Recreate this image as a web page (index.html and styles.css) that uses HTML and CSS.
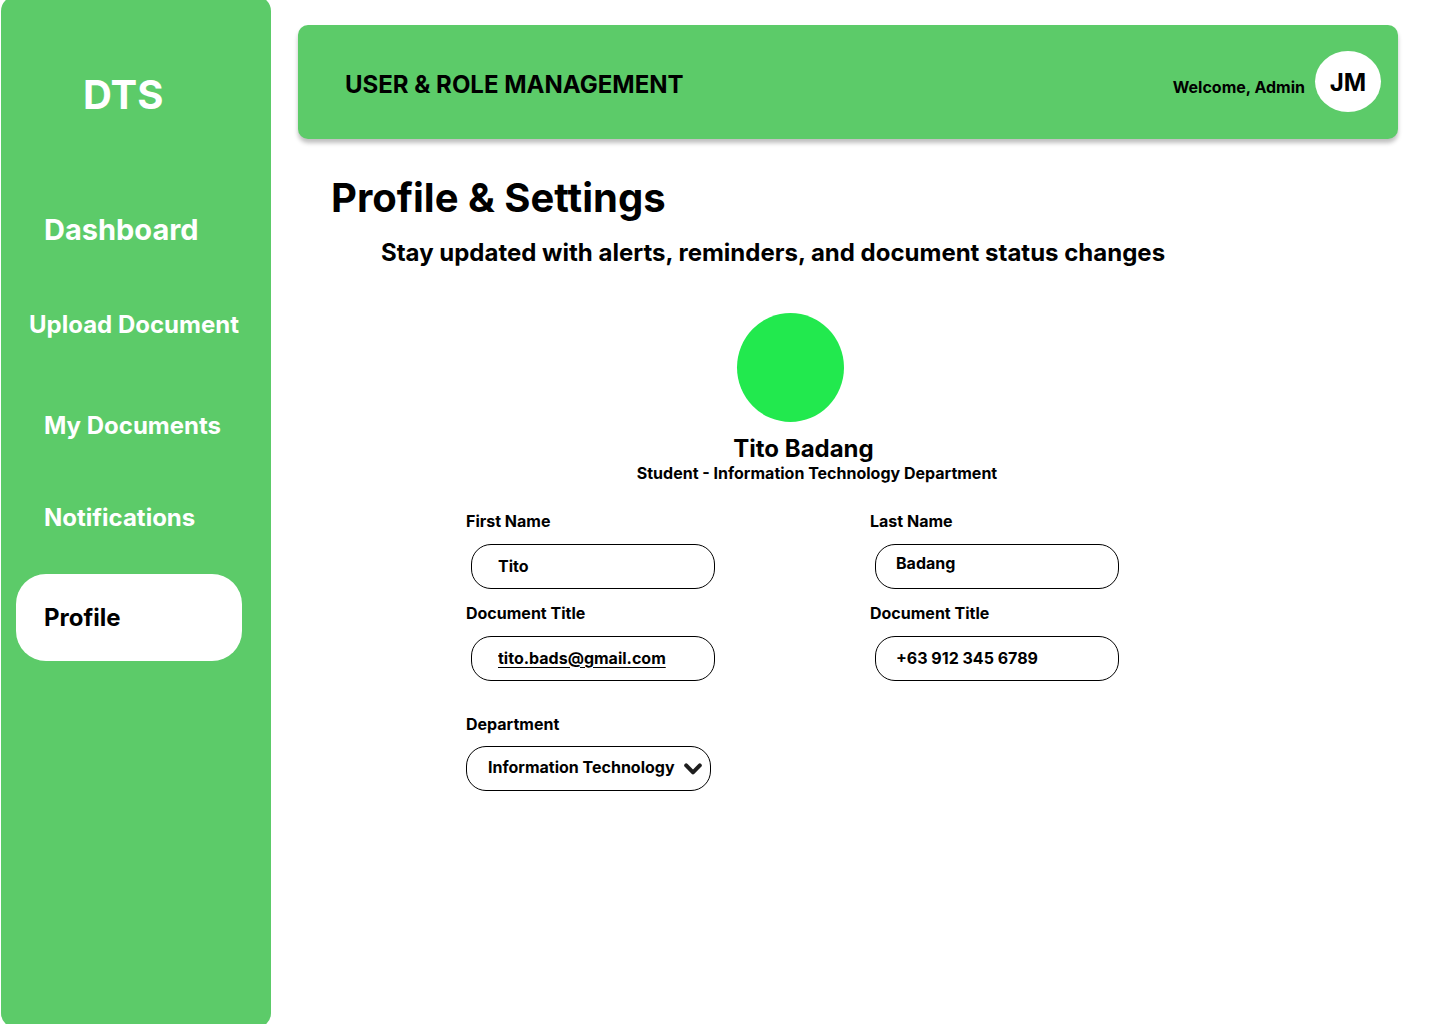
FILE: index.html
```html
<!DOCTYPE html>
<html lang="en">
<head>
  <meta charset="utf-8">
  <meta name="viewport" content="width=device-width, initial-scale=1">
  <title>DTS - Profile &amp; Settings</title>
  <link rel="stylesheet" href="styles.css">
</head>
<body>
  <div class="shell">
    <aside class="sidebar">
      <div class="brand">DTS</div>
      <nav class="nav">
        <a class="nav-link nav-link-main" href="#dashboard">Dashboard</a>
        <a class="nav-link nav-link-wide" href="#upload">Upload Document</a>
        <a class="nav-link" href="#documents">My Documents</a>
        <a class="nav-link" href="#notifications">Notifications</a>
        <a class="nav-link nav-link-active" href="#profile" aria-current="page">Profile</a>
      </nav>
    </aside>
    <div class="page">
      <header class="topbar">
        <div class="topbar-title">USER &amp; ROLE MANAGEMENT</div>
        <div class="welcome">Welcome, Admin</div>
        <div class="initials">JM</div>
      </header>
      <main class="content">
        <h1 class="title">Profile &amp; Settings</h1>
        <p class="subtitle">Stay updated with alerts, reminders, and document status changes</p>
        <section class="profile">
          <div class="avatar"></div>
          <h2 class="name">Tito Badang</h2>
          <p class="role">Student - Information Technology Department</p>
          <form class="form">
            <div class="field">
              <label for="first-name">First Name</label>
              <input class="control" id="first-name" type="text" value="Tito">
            </div>
            <div class="field">
              <label for="last-name">Last Name</label>
              <input class="control control-near control-raised" id="last-name" type="text" value="Badang">
            </div>
            <div class="field">
              <label for="email">Document Title</label>
              <input class="control control-email" id="email" type="email" value="tito.bads@gmail.com">
            </div>
            <div class="field">
              <label for="phone">Document Title</label>
              <input class="control control-near" id="phone" type="tel" value="+63 912 345 6789">
            </div>
            <div class="field field-department">
              <label for="department">Department</label>
              <div class="select">
                <select class="control control-select" id="department">
                  <option>Information Technology</option>
                </select>
                <svg class="chevron" viewBox="0 0 18 12" aria-hidden="true"><path d="M2.2 2.4 9 9.3l6.8-6.9"/></svg>
              </div>
            </div>
          </form>
        </section>
      </main>
    </div>
  </div>
</body>
</html>
```
FILE: styles.css
```css
* {
  box-sizing: border-box;
}

body {
  margin: 0;
  background: #fff;
  color: #000;
  font-family: Inter, "Liberation Sans", sans-serif;
  font-size: 16px;
  font-weight: 700;
  line-height: 20px;
}

h1, h2, p {
  margin: 0;
  font-weight: 700;
}

.shell {
  display: flex;
  min-height: 100vh;
  overflow: hidden;
}

/* Sidebar: its rounded ends run slightly past the window edges */
.sidebar {
  flex: 0 0 270px;
  margin: -4px 0 -4px 1px;
  padding: 75px 0 40px;
  border-radius: 15px;
  background: #5ccb69;
  color: #fff;
}

.brand {
  padding-left: 82px;
  font-size: 40px;
  line-height: 48px;
}

.nav {
  display: grid;
  grid-template-rows: 90px 100px 102px 82px 87px;
  margin-top: 66px;
  padding: 0 29px 0 15px;
}

.nav-link {
  display: flex;
  align-items: center;
  padding-left: 28px;
  color: inherit;
  font-size: 24px;
  line-height: 30px;
  text-decoration: none;
  white-space: nowrap;
}

.nav-link-main {
  font-size: 29px;
}

.nav-link-wide {
  padding-left: 13px;
}

.nav-link-active {
  height: 87px;
  margin-top: 15px;
  border-radius: 30px;
  background: #fff;
  color: #000;
}

/* Page */
.page {
  flex: 1;
  min-width: 0;
  padding: 25px 42px 40px 27px;
}

.topbar {
  display: flex;
  align-items: center;
  height: 114px;
  padding: 0 17px 2px 47px;
  border-radius: 10px;
  background: #5ccb69;
  box-shadow: 0 4px 4px rgba(0, 0, 0, 0.25);
}

.topbar-title {
  flex: 1;
  padding-top: 8px;
  font-size: 24px;
  line-height: 30px;
}

.welcome {
  padding-top: 12px;
}

.initials {
  display: grid;
  place-items: center;
  width: 66px;
  height: 61px;
  margin-left: 10px;
  padding-top: 4px;
  border-radius: 50%;
  background: #fff;
  font-size: 24px;
}

.content {
  padding: 34px 33px 0;
}

.title {
  font-size: 40px;
  line-height: 50px;
}

.subtitle {
  margin-top: 15px;
  padding-left: 50px;
  font-size: 24px;
  line-height: 30px;
}

.profile {
  max-width: 657px;
  margin: 45px 0 0 131px;
}

.avatar {
  width: 107px;
  height: 109px;
  margin: 0 auto;
  border-radius: 50%;
  background: #22e94e;
}

.name {
  margin-top: 13px;
  padding-left: 26px;
  font-size: 24px;
  line-height: 28px;
  text-align: center;
}

.role {
  padding-left: 53px;
  text-align: center;
}

/* Form */
.form {
  display: grid;
  grid-template-columns: 249px 249px;
  justify-content: space-between;
  row-gap: 14px;
  margin-top: 28px;
  padding-left: 4px;
}

.field {
  display: flex;
  flex-direction: column;
  gap: 13px;
}

.control {
  width: 244px;
  height: 45px;
  margin: 0 0 0 5px;
  padding: 0 20px 2px 26px;
  border: 1px solid #000;
  border-radius: 20px;
  background: #fff;
  color: #000;
  font: inherit;
}

.control-near {
  padding-left: 20px;
}

.control-raised {
  padding-bottom: 8px;
}

.control-email {
  text-decoration: underline;
  text-underline-offset: 3px;
}

.field-department {
  gap: 12px;
  margin-top: 19px;
}

.select {
  position: relative;
  width: 245px;
}

.control-select {
  width: 245px;
  margin-left: 0;
  padding: 0 30px 4px 21px;
  appearance: none;
}

.chevron {
  position: absolute;
  top: 17px;
  right: 9px;
  width: 18px;
  height: 12px;
  fill: none;
  stroke: #1e1e1e;
  stroke-width: 4;
  stroke-linecap: round;
  stroke-linejoin: round;
  pointer-events: none;
}
```
